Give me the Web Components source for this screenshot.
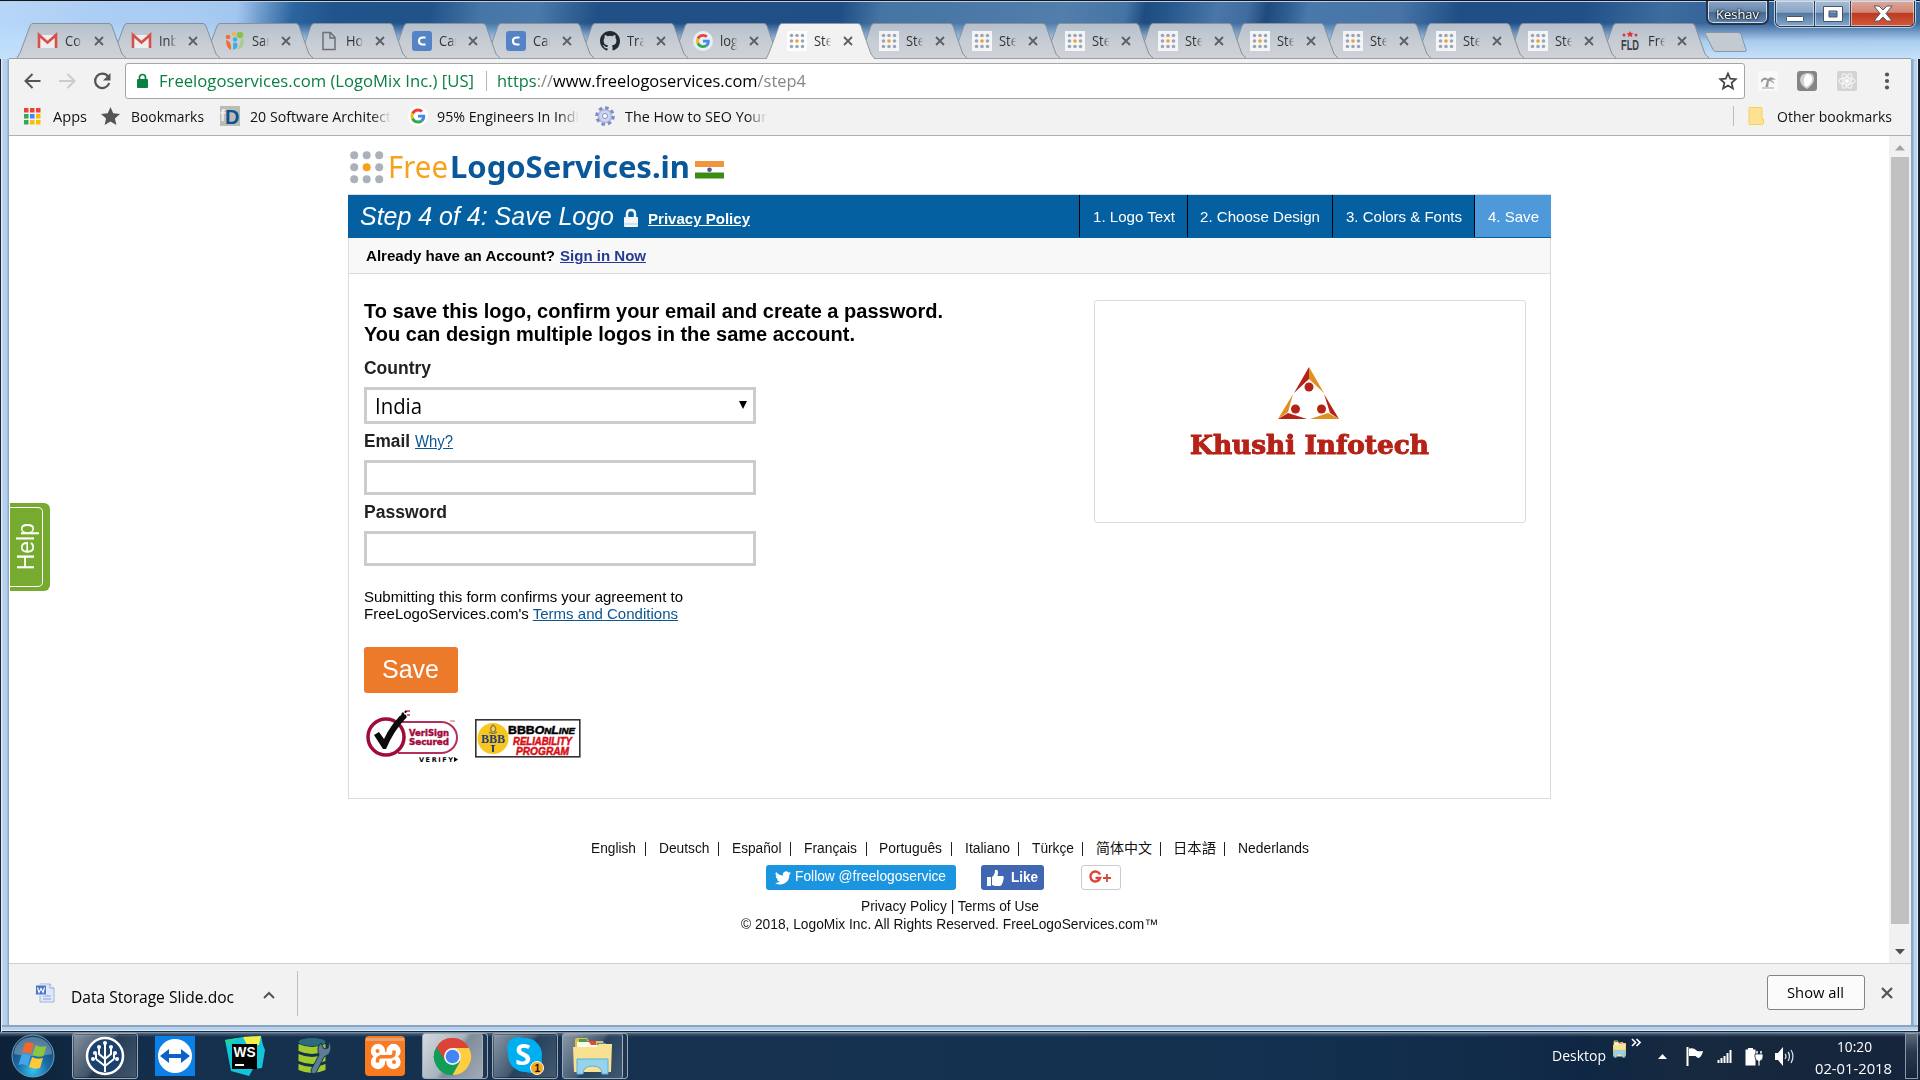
<!DOCTYPE html>
<html lang="en">
<head>
<meta charset="utf-8">
<title>Step 4 of 4: Save Logo</title>
<style>
html,body{margin:0;width:1920px;height:1080px;overflow:hidden;background:#0f2540}
</style>
</head>
<body>
<desk-top></desk-top>
<script>
const UI = "'Open Sans','Noto Sans',sans-serif";
const ARIAL = "'Liberation Sans','Noto Sans CJK SC',sans-serif";
const BASE = '*{box-sizing:border-box}svg{display:block;flex:none;overflow:visible}.row{display:flex}';
function define(name, css, html, init) {
  customElements.define(name, class extends HTMLElement {
    constructor() {
      super();
      this.attachShadow({mode: 'open'});
    }
    connectedCallback() {
      if (this.ready) return;
      this.ready = true;
      this.shadowRoot.innerHTML = '<style>' + BASE + css + '</style>' + (typeof html === 'function' ? html(this) : html);
      if (init) init(this);
    }
  });
}

const googleG = s => `<svg width="${s}" height="${s}" viewBox="0 0 48 48"><path fill="#EA4335" d="M24 9.5c3.5 0 6.700 1.200 9.200 3.600l6.900-6.900C35.900 2.400 30.500 0 24 0 14.600 0 6.500 5.400 2.600 13.200l8 6.200C12.400 13.700 17.700 9.500 24 9.500z"/><path fill="#4285F4" d="M47 24.500c0-1.600-.2-3.100-.4-4.500H24v9h12.900c-.6 3-2.300 5.500-4.800 7.200l7.700 6C44.400 38 47 31.800 47 24.500z"/><path fill="#FBBC05" d="M10.500 28.600c-.5-1.500-.8-3-.8-4.600s.3-3.100.8-4.600l-8-6.200C.9 16.500 0 20.100 0 24s.9 7.500 2.600 10.800z"/><path fill="#34A853" d="M24 48c6.500 0 11.900-2.100 15.900-5.800l-7.700-6c-2.200 1.500-4.900 2.300-8.200 2.300-6.300 0-11.600-4.200-13.500-9.900l-8 6.200C6.500 42.600 14.600 48 24 48z"/></svg>`;
const dotGrid = () => {
  let c = '';
  for (let y = 0; y < 3; y++) for (let x = 0; x < 3; x++)
    c += `<circle cx="${4.500 + x * 5.500}" cy="${4.500 + y * 5.500}" r="1.800" fill="${x == 1 && y == 1 ? '#f6a11c' : '#9ba5b5'}"/>`;
  return `<svg width="20" height="20"><rect width="20" height="20" fill="#fff" opacity=".8"/>${c}</svg>`;
};
const FAV = {
  gmail: '<svg width="20" height="20"><path d="M1 4h17v13H1z" fill="#eee"/><path d="M1 17V4l8.500 7.500L18 4v13" fill="none" stroke="#d8504a" stroke-width="2.600"/></svg>',
  people: '<svg width="20" height="20"><circle cx="3" cy="6" r="2.300" fill="#f0703a"/><circle cx="9" cy="3" r="2" fill="#f4b13b"/><circle cx="15" cy="4" r="3.300" fill="#8cc152"/><circle cx="10" cy="8.500" r="2.200" fill="#3bb0d8"/><path d="M1 9q6 1 5 10-5-2-5-10z" fill="#f0703a"/><path d="M8 12q6-2 4 5l-4 2z" fill="#3bb0e8"/><path d="M18 7q3 9-6 12 3-4 4-11z" fill="#a5cf8a"/></svg>',
  doc: '<svg width="20" height="20"><path d="M4 1.500h7.500l4.500 5v12H4zM11 2v5h5" fill="none" stroke="#6c7075" stroke-width="1.500"/></svg>',
  cblue: '<svg width="20" height="20"><rect width="20" height="20" rx="3" fill="#5584c6"/><path d="M13.500 6.500H11Q7 6.500 7 10t4 3.500h2.500" fill="none" stroke="#fff" stroke-width="2.200"/></svg>',
  github: '<svg width="20" height="20" viewBox="0 0 16 16"><path fill="#24292e" d="M8 0C3.580 0 0 3.580 0 8c0 3.540 2.290 6.530 5.470 7.590.4.070.55-.17.55-.38 0-.19-.01-.82-.01-1.490-2.010.37-2.530-.49-2.690-.94-.09-.23-.48-.94-.82-1.130-.28-.15-.68-.52-.01-.53.63-.01 1.080.58 1.230.82.72 1.210 1.870.87 2.330.66.070-.52.280-.87.510-1.070-1.780-.2-3.640-.89-3.640-3.950 0-.87.310-1.590.82-2.150-.08-.2-.36-1.020.080-2.120 0 0 .67-.21 2.200.82a7.600 7.600 0 0 1 4 0c1.530-1.040 2.200-.82 2.200-.82.440 1.100.160 1.920.080 2.120.510.560.820 1.270.820 2.150 0 3.070-1.870 3.750-3.650 3.950.290.250.540.730.540 1.480 0 1.070-.01 1.930-.01 2.200 0 .210.150.460.550.380A8 8 0 0 0 16 8c0-4.420-3.580-8-8-8z"/></svg>',
  google: '<svg width="20" height="20"><circle cx="10" cy="10" r="10" fill="#e9eef5"/><g transform="translate(3 3)">' + googleG(14) + '</g></svg>',
  step: dotGrid(),
  fld: '<svg width="20" height="20"><path d="M9 0l1.200 2 2.300.3-1.700 1.500.5 2.300L9 5 6.800 6.100l.5-2.300L5.500 2.300 8 2z" fill="#d9353f"/><circle cx="3" cy="4" r="1.500" fill="#d9353f"/><circle cx="15" cy="4" r="1.500" fill="#d9353f"/><text x="0" y="19" font-family="Liberation Sans" font-weight="bold" font-size="15" textLength="18" lengthAdjust="spacingAndGlyphs" fill="#3d4249">FLD</text></svg>'
};

define('browser-tab', `:host{display:grid;grid-template:35px/100%;flex:none}
 :host>*{grid-area:1/1}.c{display:flex;align-items:center;padding:0 0 0 21px;width:112px;font:15px/22px ${UI};color:#333}
 .t{width:21px;margin:-1px -3px 0 7px;overflow:hidden;-webkit-mask-image:linear-gradient(90deg,#000 60%,transparent 96%);height:22px;white-space:nowrap;transform:scaleX(.86);transform-origin:0 0}
 .i{width:20px}.x{margin-left:11px}`,
 h => {
  const on = h.hasAttribute('active');
  return `<svg width="109" height="35"><defs><linearGradient id="g" x1="0" y1="0" x2="0" y2="1"><stop offset="0" stop-color="#b5c0cc"/><stop offset=".6" stop-color="#c9ced5"/><stop offset="1" stop-color="#cfd2d6"/></linearGradient></defs><path d="M0 ${on ? 36 : 35}L3 30 13 3Q14 .5 16 .5H92Q94 .5 95 3L105 31 109 ${on ? 36 : 35}" fill="${on ? '#f2f2f2' : 'url(#g)'}" stroke="${on ? '#8d98a4' : '#87919c'}" stroke-width="1"/></svg>
  <div class="c"><span class="i">${FAV[h.getAttribute('icon')]}</span><span class="t"><slot></slot></span><svg class="x" width="10" height="10"><path d="M1 1l8 8M9 1l-8 8" stroke="#5c6064" stroke-width="1.800"/></svg></div>`;
 });

define('title-bar', `:host{display:flex;height:59px;align-items:flex-start;background:
 linear-gradient(180deg,transparent 0 22px,rgba(190,222,252,.85) 40px,#c4dffa 56px),
 radial-gradient(ellipse 100px 40px at 160px 20px,#abcdf4,transparent),
 linear-gradient(100deg,#b7d6f8 0,#9fc4ee 235px,#2d659f 290px,#21548c 330px,#21528a 425px,#4676a6 475px,#4b7aaa 530px,#205086 590px,#204f87 830px,#4674a3 870px,#517eab 1050px,#4573a4 1110px,#1f4c80 1130px,#24568c 1150px,#4a76a8 1200px,#416c9f 1230px,#1f4b7c 1250px,#2f5d92 1270px,#4a78ab 1290px,#4874a7 1380px,#1f4e86 1440px,#205087 1560px,#3d6c9f 1640px,#356297 1700px,#3d6da0 1920px);border-top:1px solid #10151f;box-shadow:inset 0 1px #b9d2ea}
 .tabs{display:flex;padding:22px 0 0 17px;width:1706px}
 .user{width:63px;height:24px;border:2px solid #26364d;border-top:0;border-radius:0 0 7px 7px;background:linear-gradient(#8ba6c5,#6585ab 50%,#45688f 51%,#6388b0);box-shadow:inset 0 0 0 1px #ccdae9;display:flex;justify-content:center;font:13px/26px ${UI};color:#fff;text-shadow:0 0 3px #000,0 0 2px #000}
 .win{display:flex;margin-left:6px;height:26px;border:1px solid #26364d;border-top:0;border-radius:0 0 6px 6px;overflow:hidden;box-shadow:0 0 0 1px #b9cde2}
 .win div{display:flex;justify-content:center;align-items:center;background:linear-gradient(#a5bbd3,#8ba6c6 45%,#5378a3 50%,#83a9cf);border-right:1px solid #2c405c;box-shadow:inset 0 0 0 1px rgba(255,255,255,.5)}`,
 `<div class="tabs" id="tabs"></div>
 <div class="user"><f-text w="43">Keshav</f-text></div>
 <div class="win"><div style="width:39px"><svg width="18" height="6" style="margin-top:10px"><rect x=".5" y=".5" width="17" height="5" rx="1" fill="#fff" stroke="#4a5561"/></svg></div>
 <div style="width:36px"><svg width="20" height="16"><path fill-rule="evenodd" d="M.5.5h19v15H.5zM6 5v6h8V5z" fill="#fff" stroke="#4a5561"/></svg></div>
 <div style="width:63px;border:0;background:linear-gradient(#dba99c,#d28674 45%,#bd3b20 50%,#d2583b)"><svg width="20" height="17"><path d="M1 1h5l4 4 4-4h5l-6 7.500 6 7.500h-5l-4-4-4 4H1l6-7.500z" fill="#fff" stroke="#545a66"/></svg></div></div>`,
 h => {
  const t = [['gmail','Con'],['gmail','Inbo'],['people','Sam'],['doc','Hov'],['cblue','Car'],['cblue','Car'],['github','Trav'],['google','logo'],['step','Step'],['step','Step'],['step','Step'],['step','Step'],['step','Step'],['step','Step'],['step','Step'],['step','Step'],['step','Step'],['fld','Free']];
  h.shadowRoot.getElementById('tabs').innerHTML = t.map((a, i) => `<browser-tab icon="${a[0]}" ${i == 8 ? 'active' : ''} style="width:${i < 8 ? 93.6 : 92.700}px;z-index:${i == 8 ? 40 : 30 - i}">${a[1]}</browser-tab>`).join('') +
   '<svg class="new" style="margin:9px 0 0 11px" width="42" height="25"><path d="M3 .5h31q2 0 3 2l5 15q1 2-1 2H12q-2 0-3-2L1.500 2.500Q1 .5 3 .5z" fill="#c3cad2" stroke="#8796a6"/></svg>';
 });

define('tool-bar', `:host{display:flex;background:#f2f2f2;border-top:1px solid #98a1aa;margin:-1px 0 0 9px;width:1902px;align-items:center;padding-left:15px;height:41px;font-family:${UI}}
 .box{display:flex;align-items:center;flex:none;width:1620px;height:36px;margin:4px 0 0 14px;border:1px solid #a5a5a5;border-radius:3px;background:#fff;font-size:17px;line-height:34px;padding-left:11px}
 svg,.ic{margin-top:4px}.box svg{margin-top:0}.g{color:#0b8043}.gr{color:#868686}`,
 `<svg width="17" height="16"><path d="M16.500 8H2M8.500 1L1.500 8l7 7" fill="none" stroke="#555" stroke-width="2"/></svg>
 <svg width="17" height="16" style="margin-left:18px"><path d="M0 8h15M8.500 1l7 7-7 7" fill="none" stroke="#ccc" stroke-width="2"/></svg>
 <svg width="18" height="18" style="margin-left:17px"><path d="M15 4.500A7.200 7.200 0 1 0 16.200 11" fill="none" stroke="#555" stroke-width="2.200"/><path d="M17.500 1v7.500H10z" fill="#555"/></svg>
 <div class="box"><svg width="11" height="14"><rect y="5" width="11" height="9" rx="1" fill="#0b8043"/><path d="M2.500 6V3.500a3 3 0 0 1 6 0V6" fill="none" stroke="#0b8043" stroke-width="1.700"/></svg>
 <f-text class="g" w="315" style="margin-left:11px">Freelogoservices.com (LogoMix Inc.) [US]</f-text>
 <i style="width:1px;height:20px;background:#b5b5b5;margin:0 10px 0 12px"></i>
 <f-text w="309"><span class="g">https</span><span class="gr">://</span>www.freelogoservices.com<span class="gr">/step4</span></f-text>
 <svg width="18" height="18" style="margin-left:913px"><path d="M9 1.500l2.200 5.200 5.600.5-4.200 3.700 1.300 5.500L9 13.500l-4.900 2.900 1.300-5.500L1.200 7.200l5.600-.5z" fill="none" stroke="#444" stroke-width="1.700"/></svg></div>
 <svg width="20" height="20" style="margin-left:13px"><rect width="20" height="20" fill="#f9f9f9"/><path d="M4 8q3-3 6 0 3-4 8 1-3-1-5 0 3 1 3 4-2-3-5-3l-1 7H7l2-8q-4-1-5 3-2-3 0-4z" fill="#9a9a9a"/><path d="M4 17h12" stroke="#ccc" stroke-width="2"/></svg>
 <svg width="20" height="20" style="margin-left:19px"><rect width="20" height="20" rx="3" fill="#858585"/><path d="M10 2q7-1 7 6 0 5-7 10-7-4-7-9 0-6 7-7z" fill="#d0d0d0"/><path d="M10 3q6 1 5 6-1 5-6 7-3-3-2-8 1-4 3-5z" fill="#fff"/></svg>
 <svg width="20" height="20" style="margin-left:20px"><rect width="20" height="20" rx="2" fill="#d3d3d3"/><g fill="none" stroke="#f2f2f2" stroke-width="1.300"><ellipse cx="10" cy="10" rx="8" ry="3.300"/><ellipse cx="10" cy="10" rx="8" ry="3.300" transform="rotate(60 10 10)"/><ellipse cx="10" cy="10" rx="8" ry="3.300" transform="rotate(120 10 10)"/></g><circle cx="10" cy="10" r="2" fill="#fff"/></svg>
 <svg width="6" height="18" style="margin-left:27px"><g fill="#555"><circle cx="3" cy="2.500" r="2.100"/><circle cx="3" cy="9" r="2.100"/><circle cx="3" cy="15.500" r="2.100"/></g></svg>`);

define('bookmarks-bar', `:host{display:flex;height:37px;width:1902px;margin-left:9px;background:#f2f2f2;border-bottom:1px solid #b0b0b0;align-items:center;padding:0 0 2px 15px;font:15px/22px ${UI};color:#111}
 .f{-webkit-mask-image:linear-gradient(90deg,#000 86%,transparent)}`,
 `<svg width="17" height="17" id="apps"></svg>
 <f-text w="34" style="margin-left:12px">Apps</f-text>
 <svg width="19" height="18" style="margin-left:14px"><path d="M9.500 0l2.700 6.300 6.800.6-5.100 4.500 1.500 6.600-5.900-3.500L3.600 18l1.500-6.600L0 6.900l6.800-.6z" fill="#555"/></svg>
 <f-text w="73" style="margin-left:11px">Bookmarks</f-text>
 <svg width="20" height="20" style="margin-left:16px"><rect width="20" height="20" fill="#bcbcb4"/><text x="0" y="15" font-size="16" font-weight="bold" fill="#eee" font-family="Liberation Sans">f</text><text x="5" y="17.500" font-size="20" font-weight="bold" fill="#0b5394" font-family="Liberation Sans">D</text></svg>
 <f-text w="141" class="f" style="margin-left:10px">20 Software Architect</f-text>
 <svg width="20" height="20" style="margin-left:17px"><circle cx="10" cy="10" r="10" fill="#fff"/><g transform="translate(2.500 2.500)">${googleG(15)}</g></svg>
 <f-text w="142" class="f" style="margin-left:9px">95% Engineers In Indi</f-text>
 <svg width="20" height="20" style="margin-left:16px"><circle cx="10" cy="10" r="7.500" fill="#b4bde0"/><circle cx="10" cy="10" r="8.300" fill="none" stroke="#7e8cc4" stroke-width="3" stroke-dasharray="3.500 3"/><circle cx="10" cy="10" r="5.500" fill="#d0d6ef"/><circle cx="10" cy="10" r="2.500" fill="#fff" stroke="#7e8cc4"/></svg>
 <f-text w="142" class="f" style="margin-left:10px">The How to SEO Your</f-text>
 <i style="width:1px;height:20px;background:#bbb;margin-left:966px"></i>
 <svg width="16" height="18" style="margin-left:14px"><path d="M1 .5h12q1 0 1 1V12h1.500v4q0 1.500-1.500 1.500H1z" fill="#fde293" stroke="#f5d15f"/></svg>
 <f-text w="115" style="margin-left:13px">Other bookmarks</f-text>`,
 h => {
  const c = ['#ea4335','#ea4335','#ea4335','#34a853','#4285f4','#fbbc05','#34a853','#fbbc05','#fbbc05'];
  h.shadowRoot.getElementById('apps').innerHTML = c.map((k, i) => `<rect x="${i % 3 * 6}" y="${(i / 3 | 0) * 6}" width="4.500" height="4.500" fill="${k}"/>`).join('');
 });

define('step-header', `:host{display:flex;height:44px;border-top:1px solid #dcdcdc;background:#0460a1;color:#fff;padding-left:12px;align-items:flex-start;font-family:${ARIAL}}
 .n{display:flex;margin-left:auto;height:42px;font-size:15px;line-height:44px}.n div{border-left:1px solid #000;padding-left:13px}.n .on{background:#4e99da}`,
 `<f-text w="254" style="font:italic 25px/43px ${ARIAL}">Step 4 of 4: Save Logo</f-text>
 <svg width="14" height="19" style="margin:14px 0 0 10px"><rect y="8" width="14" height="10" rx="1" fill="#f2f6fa"/><path d="M3 9V5q0-4 4-4t4 4v4" fill="none" stroke="#f2f6fa" stroke-width="2.500"/><path d="M0 15h14" stroke="#b5cbe0"/></svg>
 <f-text w="102" style="margin-left:10px;font:bold 15px/48px ${ARIAL};text-decoration:underline">Privacy Policy</f-text>
 <div class="n"><div style="width:108px"><f-text w="82">1. Logo Text</f-text></div><div style="width:145px;padding-left:12px"><f-text w="120">2. Choose Design</f-text></div><div style="width:142px"><f-text w="116">3. Colors &amp; Fonts</f-text></div><div class="on" style="width:77px"><f-text w="51">4. Save</f-text></div></div>`);

define('save-form', `:host{display:block;width:640px;padding:26px 0 0 15px;font-family:${ARIAL};color:#000}
 .b{font-weight:bold;font-size:20px;line-height:23px;height:23px}.l{font-weight:bold;font-size:17.500px;line-height:24px;height:24px;color:#222;display:flex}
 .in{width:392px;border:3px solid #ccc;background:#fff;display:flex}
 .p{font-size:15px;line-height:17px;height:17px}a{text-decoration:underline;color:#0b5592}`,
 `<div class="b"><f-text w="579">To save this logo, confirm your email and create a password.</f-text></div>
 <div class="b"><f-text w="491">You can design multiple logos in the same account.</f-text></div>
 <div class="l" style="margin-top:10px"><f-text w="67">Country</f-text></div>
 <div class="in" style="margin-top:7px;height:37px;font:21px/33px ${UI};padding-left:8px"><f-text w="47">India</f-text><svg width="8" height="8" style="margin:11px 0 0 317px"><path d="M0 0h8L4 8z"/></svg></div>
 <div class="l" style="margin-top:5px"><f-text w="46">Email</f-text><f-text w="38" style="margin-left:5px;font:16px/25px ${ARIAL}"><a>Why?</a></f-text></div>
 <div class="in" style="margin-top:7px;height:35px"></div>
 <div class="l" style="margin-top:5px"><f-text w="83">Password</f-text></div>
 <div class="in" style="margin-top:7px;height:35px"></div>
 <div class="p" style="margin-top:22px"><f-text w="319">Submitting this form confirms your agreement to</f-text></div>
 <div class="p"><f-text w="314">FreeLogoServices.com's <a>Terms and Conditions</a></f-text></div>
 <div style="margin-top:25px;width:94px;height:46px;border-radius:3px;background:#ed792b;color:#fff;padding-left:18px;font-size:25px;line-height:44px"><f-text w="57">Save</f-text></div>
 <div class="row" style="margin-top:17px;align-items:flex-start">
 <svg width="95" height="54" style="margin-left:2px"><path d="M36 12h39a16 15.500 0 0 1 0 31H32" fill="none" stroke="#b3305b" stroke-width="2"/><circle cx="20" cy="27" r="18" fill="#fff" stroke="#a00b3b" stroke-width="3.500"/><path d="M8 25l5-3 5 7Q25 14 37 3l4 4Q28 20 20 39h-3z" fill="#0b0b0b"/><path d="M33 7l4 3M36 3l4 4M39 1l2 2" stroke="#0b0b0b" stroke-width="2.500" stroke-dasharray="2 1"/><path d="M41 1h3M41 5h3" stroke="#b3305b" stroke-width="1.500"/><g font-family="DejaVu Sans" font-weight="bold" font-size="8" fill="#a00b3b" stroke="#a00b3b" stroke-width=".4"><text x="43" y="26" textLength="40" lengthAdjust="spacingAndGlyphs">VeriSign</text><text x="43" y="35" textLength="40" lengthAdjust="spacingAndGlyphs">Secured</text></g><text x="53" y="52" font-family="DejaVu Sans" font-weight="bold" font-size="6.500" textLength="34">VERIFY</text><path d="M88 47v5l4-2.500z"/><path d="M84 11h5" stroke="#c66" /></svg>
 <svg width="106" height="39" style="margin:9px 0 0 14px"><rect x=".8" y=".8" width="104" height="37" fill="#fff" stroke="#333" stroke-width="1.600"/><circle cx="18" cy="19.500" r="15.500" fill="#f7c61f"/><path d="M18 6q-4 4-1 7h2q4-3-1-7zM14 13q4 3 8 0" fill="#f7d35c" stroke="#8a7c35" stroke-width="1.200"/><text x="6" y="24" font-family="Liberation Serif" font-weight="bold" font-size="12" textLength="24" lengthAdjust="spacingAndGlyphs" fill="#24407a">BBB</text><path d="M15 26h6l-2 1v6h-2v-6z" fill="#24407a"/><g font-family="Liberation Sans" font-weight="bold" stroke-width=".5"><text x="33" y="15" font-size="11.500" textLength="67" lengthAdjust="spacingAndGlyphs" stroke="#000">BBB<tspan font-style="italic">O</tspan><tspan font-style="italic" font-size="9">N</tspan><tspan font-style="italic">L</tspan><tspan font-style="italic" font-size="9">INE</tspan></text><g font-style="italic" fill="#d90e15" stroke="#d90e15" font-size="11"><text x="38" y="26" textLength="59" lengthAdjust="spacingAndGlyphs">RELIABILITY</text><text x="41" y="35.500" textLength="53" lengthAdjust="spacingAndGlyphs">PROGRAM</text></g></g></svg>
 </div>`);

define('logo-preview', `:host{display:flex;flex-direction:column;width:432px;height:223px;margin:26px 0 0 105px;border:1px solid #dcdcdc;border-radius:3px;background:#fff}`,
 `<svg width="61" height="53" style="margin:66px 0 0 183px"><g fill="#b52318"><path d="M31 0v12L16 26zM46 27l15 25-9-6zM0 52l10-6 19 6z"/><circle cx="31" cy="20" r="4.500"/><circle cx="17.500" cy="42" r="4.500"/><circle cx="43.500" cy="42" r="4.500"/></g><g fill="#e0901e"><path d="M31 0v12l15 14zM15 27L0 52l10-7zM61 52H32l18-6z"/></g></svg>
 <f-text w="239" style="margin:7px 0 0 95px;font:bold 26px/36px 'DejaVu Serif',serif;color:#b52318;-webkit-text-stroke:1px #b52318">Khushi Infotech</f-text>`);

define('page-footer', `:host{display:flex;flex-direction:column;width:1203px;margin:38px 0 0 339px;font:14px/22px ${ARIAL};color:#111}
 .r{display:flex}.s{display:flex;align-items:center;height:25px;border-radius:3px;color:#fff}`,
 `<div class="r" id="langs"></div>
 <div class="r" style="margin-top:6px">
 <div class="s" style="margin-left:418px;width:190px;background:#1b95e0;padding-left:9px"><svg width="16" height="14" viewBox="0 0 24 20"><path fill="#fff" d="M24 2.400a10 10 0 0 1-2.800.8A5 5 0 0 0 23.300.5a10 10 0 0 1-3.100 1.200 4.900 4.900 0 0 0-8.400 4.500A14 14 0 0 1 1.700 1a4.900 4.900 0 0 0 1.500 6.600A5 5 0 0 1 1 7v.1a4.900 4.900 0 0 0 3.900 4.800 5 5 0 0 1-2.200.1 4.900 4.900 0 0 0 4.600 3.400A10 10 0 0 1 0 17.500 14 14 0 0 0 21.500 5a10 10 0 0 0 2.500-2.600z"/></svg><f-text w="151" style="margin:-3px 0 0 4px;font-size:15px">Follow @freelogoservice</f-text></div>
 <div class="s" style="margin-left:25px;width:63px;background:#4267b2;padding-left:6px"><svg width="17" height="16"><path d="M0 7h4v9H0zM5 7q3-2 3-7 3-1 3 3l-.5 3H16q1.500 1 .5 3 0 1-.5 2 0 2-1 2.500 0 2-2 2.500H8l-3-1z" fill="#fff"/></svg><f-text w="27" style="margin:-1px 0 0 7px;font-weight:bold">Like</f-text></div>
 <div class="s" style="margin-left:37px;width:40px;background:#fff;border:1px solid #ccc;padding-left:7px"><svg width="22" height="13"><path d="M11 3.500A5 5 0 1 0 11.200 7H6.500" fill="none" stroke="#db4437" stroke-width="2.400"/><path d="M18 3v8M14 7h8" stroke="#db4437" stroke-width="1.800"/></svg></div>
 </div>
 <div class="r" style="margin:5px 0 0 513px;height:19px"><f-text w="178">Privacy Policy | Terms of Use</f-text></div>
 <div class="r" style="margin:-1px 0 0 393px"><f-text w="417">© 2018, LogoMix Inc. All Rights Reserved. FreeLogoServices.com™</f-text></div>`,
 h => {
  const L = [['English',591,45,644],['Deutsch',658.5,50.500,717],['Español',731.5,49.500,789],['Français',804,53,865],['Português',879,63,950],['Italiano',964.5,45,1017],['Türkçe',1032,42,1081],['简体中文',1096,56,1159],['日本語',1173,43,1223],['Nederlands',1238,71,0]];
  let x = 348, s = '';
  for (const [t, a, w, b] of L) {
    s += `<f-text w="${w}" style="margin-left:${a - x}px">${t}</f-text>`;
    x = a + w;
    if (b) { s += `<f-text w="3" style="margin-left:${b - x - .5}px">|</f-text>`; x = b + 2.500; }
  }
  h.shadowRoot.getElementById('langs').innerHTML = s;
 });

define('help-tab', `:host{position:absolute;left:1px;top:367px;width:40px;height:88px;background:#76ab2f;border-radius:0 6px 6px 0;padding:4px 3px 4px 0}
 div{height:80px;border:1px solid #fff;border-left:0;border-radius:0 5px 5px 0;writing-mode:vertical-rl;display:flex;align-items:center;justify-content:center}
 f-text{transform:rotate(180deg);color:#fff;font:23px/32px ${ARIAL}}`,
 `<div><f-text>Help</f-text></div>`);

define('page-view', `:host{display:flex;position:relative;width:1902px;height:827px;margin-left:9px;background:#fff}
 .main{width:1880px}.logo{display:flex;height:58px;padding-left:341px;font:30.500px/61px "Noto Sans","Open Sans",sans-serif}
 .box{width:1203px;margin-left:339px;height:605px}.card{border:1px solid #dcdcdc;border-top:0;height:561px}
 .acc{display:flex;height:36px;background:#f8f8f8;border-bottom:1px solid #dcdcdc;padding-left:17px;font:bold 15px/35px ${ARIAL};color:#000}
 .sb{width:22px;background:#f1f1f1;display:flex;flex-direction:column;align-items:center}`,
 `<div class="main">
 <div class="logo"><svg width="34" height="34" style="margin-top:15px" id="d"></svg><f-text w="60" style="margin-left:4px;color:#f7a21c">Free</f-text><f-text w="240" style="margin-left:2px;color:#0a5799;font-weight:bold">LogoServices.in</f-text>
 <svg width="29" height="18" style="margin:25px 0 0 5px"><rect width="29" height="6" fill="#f0953c"/><rect y="11.500" width="29" height="6" fill="#3a8c14"/><circle cx="14.500" cy="8.700" r="2.300" fill="#5350a8"/></svg></div>
 <div class="box"><step-header></step-header><div class="card"><div class="acc"><f-text w="189">Already have an Account?</f-text><f-text w="86" style="margin-left:5px;color:#263a92;text-decoration:underline">Sign in Now</f-text></div>
 <div class="row"><save-form></save-form><logo-preview></logo-preview></div></div></div>
 <page-footer></page-footer>
 </div>
 <div class="sb"><svg width="10" height="6" style="margin-top:9px"><path d="M5 0l5 5.500H0z" fill="#a3a3a3"/></svg><div style="width:18px;height:767px;background:#c1c1c1;margin-top:6px"></div><svg width="10" height="6" style="margin-top:25px"><path d="M0 0h10L5 5.500z" fill="#505050"/></svg></div>
 <help-tab></help-tab>`,
 h => {
  let s = '';
  for (let i = 0; i < 9; i++) s += `<circle cx="${4.200 + i % 3 * 12.500}" cy="${4.200 + (i / 3 | 0) * 12}" r="4" fill="${i == 4 ? '#f9a11b' : '#abb0bb'}"/>`;
  h.shadowRoot.getElementById('d').innerHTML = s;
 });

define('download-shelf', `:host{display:flex;width:1902px;height:62px;margin-left:9px;background:#f2f2f2;border-top:1px solid #d0d0d0;padding-left:26px;font-family:${UI}}
 .b{width:98px;height:35px;margin:11px 0 0 1469px;border:1px solid #848484;border-radius:3px;background:#fbfbfb;padding-left:19px;font-size:15px;line-height:33px;color:#000}`,
 `<svg width="20" height="20" style="margin-top:19px"><path d="M5 1h10l4 4v14H5z" fill="#dfe8fa" stroke="#a0b3dc"/><path d="M15 1v4h4M8 13h8M8 16h8" stroke="#84a0da" fill="#fff"/><rect x=".5" y="2" width="11" height="10" rx="1" fill="#4b75c7" stroke="#eaf0fb"/><path d="M2.500 4.500l1.500 5 2-4 2 4 1.500-5" fill="none" stroke="#fff" stroke-width="1.200"/></svg>
 <f-text w="163" style="margin:20px 0 0 16px;font-size:16px;line-height:26px">Data Storage Slide.doc</f-text>
 <svg width="12" height="8" style="margin:27px 0 0 29px"><path d="M1 7l5-5 5 5" fill="none" stroke="#555" stroke-width="2"/></svg>
 <i style="width:1px;height:45px;background:#c0c0c0;margin:7px 0 0 22px"></i>
 <div class="b"><f-text w="57">Show all</f-text></div>
 <svg width="12" height="12" style="margin:23px 0 0 16px"><path d="M1 1l10 10M11 1L1 11" stroke="#555" stroke-width="2.200"/></svg>`);

const flagIcon = '<svg width="18" height="19"><path d="M1.500 0v19" stroke="#fff" stroke-width="2"/><path d="M3 1.500q5-1 7 1.500 1 2 7 1-1 5-4 7-2 0-3.500-2H3z" fill="#fff"/></svg>';
const folder = (w, h) => `<svg width="${w}" height="${h}" viewBox="0 0 39 38" preserveAspectRatio="none"><path d="M2 3q0-2 2-2h10l2 3h14l1 3h6v27H2z" fill="#e5bd4b"/><path d="M6 2h8v5H6z" fill="#3aa655"/><path d="M14 4h9v4h-9z" fill="#e04a3a"/><path d="M24 6h9v4h-9z" fill="#4a90d9"/><path d="M4 5h12l2 3h17v4H4z" fill="#fffbe8"/><path d="M0 10h23l3-3h13l-1 28H1z" fill="#f8e190"/><path d="M4 22h31v15h-6q0-8-9.500-8T10 37H4z" fill="#96d4ee" stroke="#5bb0dc"/></svg>`;

define('task-button', `:host{display:flex;flex:none;width:66px;height:46px;border:1px solid #9aa7b5;border-radius:3px;background:linear-gradient(125deg,rgba(255,255,255,.5),rgba(255,255,255,.2) 45%,rgba(255,255,255,.08) 50%,rgba(255,255,255,.2));align-items:center;justify-content:center;box-shadow:inset 0 0 0 1px rgba(0,0,0,.35)}
 :host([stack]){box-shadow:inset -4px 0 0 #22364f,inset -5px 0 0 #a3b0bd;padding-right:5px}
 :host([on]){background:linear-gradient(125deg,#d5dae0,#a9b3be 45%,#7f8c9a 52%,#a5afba)}`, '<slot></slot>');

define('task-bar', `:host{display:flex;height:48px;background:linear-gradient(#8fa3b8 0,#41566f 2px,transparent 5px),linear-gradient(90deg,#0d2138,#14304d 160px,#163250 700px,#12304f 1300px,#112c49 1500px,#0f2744 1580px,#17293e 1700px,#15243a);align-items:center;color:#fff;font:15px/20px ${UI}}
 task-button svg{display:block}svg{overflow:visible;flex:none}`,
 `<svg width="44" height="44" style="margin-left:11px"><defs><radialGradient id="o" cx=".5" cy=".85" r=".9"><stop offset="0" stop-color="#32c3f1"/><stop offset=".4" stop-color="#1c6ba6"/><stop offset="1" stop-color="#16395f"/></radialGradient></defs><circle cx="22" cy="22" r="21" fill="url(#o)" stroke="#6e9fc0"/><path d="M3 20a19 17 0 0 1 38 0q-19 4-38 0z" fill="#fff" opacity=".28"/><path d="M14 9q5-2 9 1l-3 10q-4-3-9-1z" fill="#f0682c"/><path d="M24.500 11q5 3 11 1l-3 10q-5 2-11-1z" fill="#8cc63f"/><path d="M10.500 21q5-2 9 1l-3 10q-4-3-9-1z" fill="#44a5e8"/><path d="M21 23q5 3 11 1l-3 10q-5 2-11-1z" fill="#fcc938"/></svg>
 <task-button style="margin-left:17px"><svg width="38" height="38"><circle cx="19" cy="19" r="18" fill="#1d416e" stroke="#fff" stroke-width="2.500"/><g fill="none" stroke="#fff" stroke-width="2"><path d="M19 35V6M19 29l-9-7M19 29l9-7M19 22l-6-5v-6M19 22l6-5v-6M10 22v-5M28 22v-5"/></g><g fill="#fff"><circle cx="19" cy="6" r="2"/><circle cx="13" cy="10" r="2"/><circle cx="25" cy="10" r="2"/><circle cx="9" cy="16" r="2"/><circle cx="29" cy="16" r="2"/><circle cx="7" cy="22" r="2"/><circle cx="31" cy="22" r="2"/></g></svg></task-button>
 <svg width="40" height="40" style="margin-left:17px"><rect width="40" height="40" fill="#0c80e6"/><circle cx="20" cy="20" r="17" fill="#fff"/><path d="M5 20l9-7v5h12v-5l9 7-9 7v-5H14v5z" fill="#0c62c9"/></svg>
 <svg width="40" height="40" style="margin-left:30px"><path d="M0 4L18 1 36 0l2 9 2 5-3 18-9 1-4 7L6 35z" fill="#12c5d8"/><path d="M18 1l18-1-2 9H22z" fill="#f5ee45"/><path d="M3 10L0 4l14-2z" fill="#20d59a"/><rect x="7" y="8" width="25" height="25" fill="#000"/><text x="8.500" y="21" font-family="Liberation Sans" font-weight="bold" font-size="14" textLength="22" lengthAdjust="spacingAndGlyphs" fill="#fff">WS</text><path d="M10 29h9" stroke="#fff" stroke-width="2"/></svg>
 <svg width="34" height="36" style="margin-left:33px"><ellipse cx="14" cy="4" rx="13.500" ry="4" fill="#2d6a7c"/><path d="M.5 6q13.500 6 27 0v7q-13.500 6-27 0zM.5 16q13.500 6 27 0v7q-13.500 6-27 0zM.5 26q13.500 6 27 0v6q-13.500 6-27 0z" fill="#9fcb2d"/><path d="M23 5l3 6 4-1 1-6q4 6 0 12l-5 3-8 16q-5 2-5-3l8-15q-3-8 2-12z" fill="#5b7e96" stroke="#18324c"/></svg>
 <svg width="40" height="40" style="margin-left:33px"><rect width="40" height="40" rx="4" fill="#fa7a20"/><path d="M1 2h38v3H1z" fill="#d5b59d" opacity=".7"/><g fill="#fff"><circle cx="13" cy="15" r="7.200"/><circle cx="28.500" cy="15" r="7.200"/><circle cx="13" cy="26" r="7.200"/><circle cx="28.500" cy="26" r="7.200"/><path d="M9 16h23v9H9z"/></g><path d="M12.500 26.500v-2.500q0-2 3-3.300H26q3-1 3-3V14.500" fill="none" stroke="#fa7a20" stroke-width="3.400"/><circle cx="12.500" cy="15" r="2" fill="#fa7a20"/><circle cx="29" cy="26" r="2" fill="#fa7a20"/></svg>
 <task-button on stack style="margin-left:17px"><svg width="37" height="37" viewBox="0 0 48 48"><path d="M24 24L3.200 12A24 24 0 0 1 44.800 12z" fill="#db4437"/><path d="M24 24L3.200 12A24 24 0 0 0 24 48z" fill="#0f9d58"/><path d="M24 24v24A24 24 0 0 0 44.800 12H24z" fill="#ffcd40"/><path d="M24 13h21L44.800 12Q38 1 24 0 10 0 3.200 12L14 29z" fill="#db4437"/><path d="M14.500 30L3.200 12A24 24 0 0 0 24 48l10-18z" fill="#0f9d58"/><circle cx="24" cy="24" r="11" fill="#f1f1f1"/><circle cx="24" cy="24" r="8.800" fill="#4285f4"/></svg></task-button>
 <task-button style="margin-left:4px"><svg width="38" height="40"><circle cx="12" cy="12" r="11" fill="#00aff0"/><circle cx="25" cy="26" r="11" fill="#00aff0"/><circle cx="19" cy="19" r="17" fill="#00aff0"/><text x="9" y="29" font-family="Noto Sans" font-size="29" font-weight="bold" fill="#fff">S</text><circle cx="31" cy="32" r="6.500" fill="#f9a71f" stroke="#fff"/><text x="28.500" y="36" font-size="10" font-weight="bold" font-family="Liberation Sans" fill="#111">1</text></svg></task-button>
 <task-button stack style="margin-left:4px">${folder(39, 38)}</task-button>
 <f-text w="54" style="margin:-2px 0 0 924px">Desktop</f-text>
 <span style="margin:-14px 0 0 7px">${folder(13, 18)}</span>
 <svg width="10" height="8" style="margin:-26px 0 0 5px"><path d="M1 0l3.500 3.500L1 7M5.500 0L9 3.500 5.500 7" fill="none" stroke="#fff" stroke-width="1.700"/></svg>
 <svg width="9" height="5" style="margin-left:17px"><path d="M4.500 0L9 5H0z" fill="#fff"/></svg>
 <span style="margin-left:19px">${flagIcon}</span>
 <svg width="15" height="13" style="margin-left:13px"><path d="M1.500 13v-3M4.500 13v-5M7.500 13V6M10.500 13V3M13.500 13V0" stroke="#fff" stroke-width="2"/></svg>
 <svg width="18" height="19" style="margin-left:13px"><rect x="1" y="3" width="9" height="15" fill="#fff" stroke="#fff" stroke-width="1"/><path d="M3 1h5v2H3z" fill="#fff"/><path d="M12 4v4M16 4v4" stroke="#fff" stroke-width="1.500"/><path d="M10 7h8v3q0 3-3 4v5h-2v-5q-3-1-3-4z" fill="#fff" stroke="#14243a" stroke-width=".8"/></svg>
 <svg width="19" height="19" style="margin-left:12px"><path d="M0 6h3l5-6v19l-5-6H0z" fill="#fff"/><path d="M10 7q2 2 0 5M13 5q3 4 0 9M16 3q4 6 0 13" fill="none" stroke="#d5dce5" stroke-width="1.300"/></svg>
 <div style="width:77px;margin-left:21px;padding:2px 0 0;line-height:22px"><f-text w="35" style="display:block;margin-left:22px">10:20</f-text><f-text w="77" style="display:block">02-01-2018</f-text></div>
 <div style="width:13px;height:46px;margin-left:13px;border:1px solid #8d99a7;background:linear-gradient(#5d6c7d,#2a394c 40%,#16253a)"></div>`);

define('browser-window', `:host{display:block;height:1032px;background:linear-gradient(90deg,#20242c 0 1px,#dcebf9 1px 2px,#b3d0ef 3px 7px,#8fa8c3 8px 9px,#b8d2ee 9px 1911px,#8fa8c3 1911px 1913px,#b3d4f5 1914px 1917px,#e3f0fb 1917px 1918px,#1b1f28 1918px)}
 .e{height:7px;margin:0 2px;background:linear-gradient(#8fa5bd 0 2px,#b5d2f0 2px 5px,#dcebf8 5px 6px,#1b2a3d 6px)}`,
 `<title-bar></title-bar><tool-bar></tool-bar><bookmarks-bar></bookmarks-bar><page-view></page-view><download-shelf></download-shelf><div class="e"></div>`);

define('desk-top', ':host{display:flex;flex-direction:column;width:1920px;height:1080px;overflow:hidden}', '<browser-window></browser-window><task-bar></task-bar>');

/* Single-line label, condensed or stretched horizontally to the width in its "w" attribute. */
define('f-text', ':host{display:inline-block;white-space:nowrap;flex:none}span{display:inline-block;transform-origin:0 0;text-decoration:inherit;vertical-align:top}', '<span><slot></slot></span>', h => {
  const w = +h.getAttribute('w');
  if (!w) return;
  const s = h.shadowRoot.querySelector('span');
  s.style.transform = `scaleX(${w / s.getBoundingClientRect().width})`;
  h.style.width = w + 'px';
});
</script>
</body>
</html>
